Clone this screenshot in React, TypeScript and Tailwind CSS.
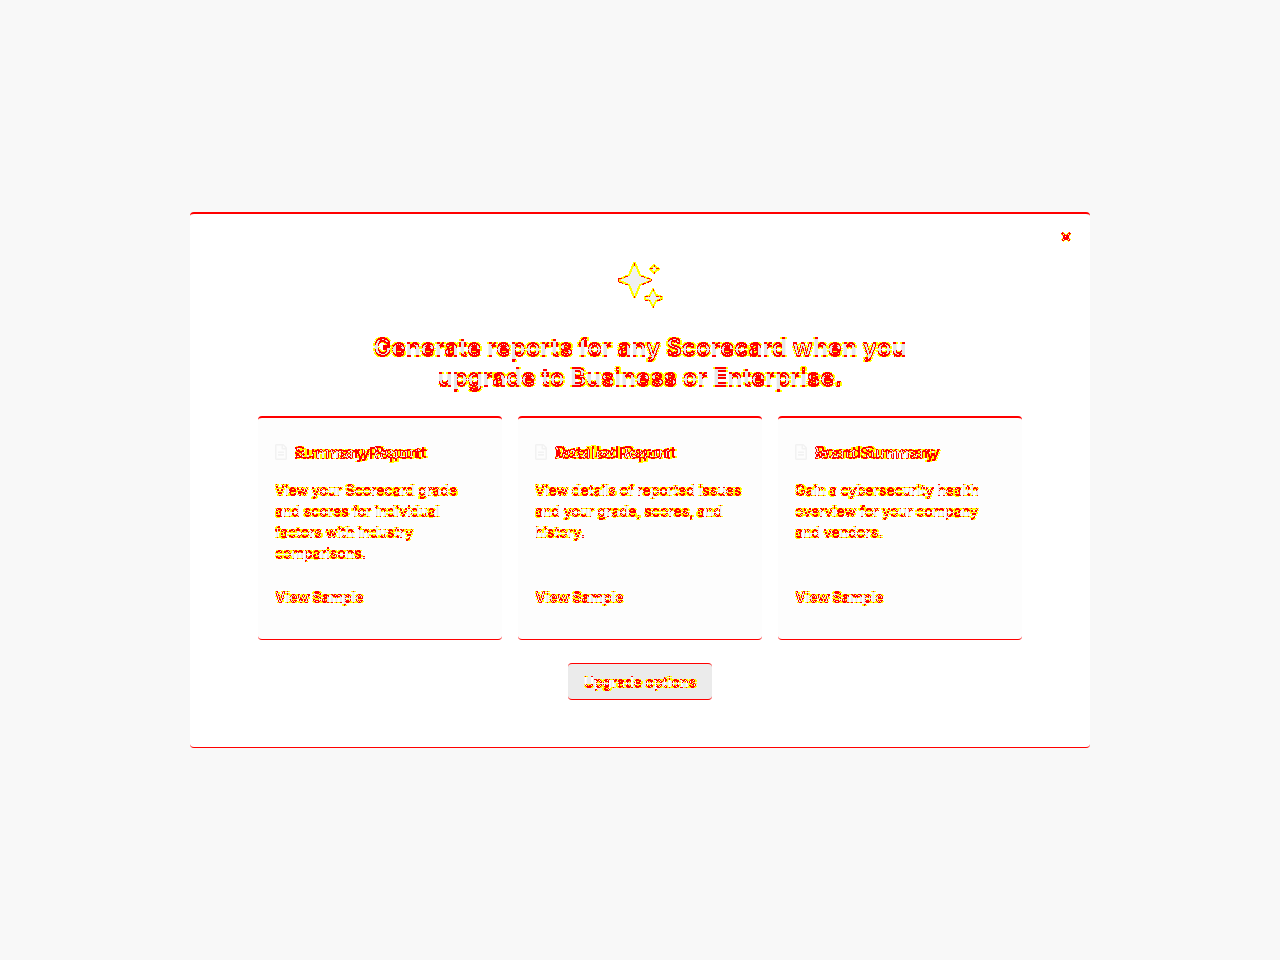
import { FaRegFileAlt } from "react-icons/fa";

const reports = [
  {
    title: "Summary Report",
    text: "View your Scorecard grade and scores for individual factors with industry comparisons.",
  },
  {
    title: "Detailed Report",
    text: "View details of reported issues and your grade, scores, and history.",
  },
  {
    title: "Board Summary",
    text: "Gain a cybersecurity health overview for your company and vendors.",
  },
];

// Paints a pale fill, red where a shifted copy differs and yellow along its curved edges.
function ShiftFilter({ id, dx, dy, fill }: { id: string; dx: number; dy: number; fill: string }) {
  return (
    <filter id={id} x="0" y="-0.1" width="1.02" height="1.2" colorInterpolationFilters="sRGB">
      <feOffset in="SourceAlpha" dx={dx} dy={dy} result="moved" />
      <feComposite in="SourceAlpha" in2="moved" operator="arithmetic" k1="0" k2="1" k3="-1" k4="0" result="d1" />
      <feComposite in="moved" in2="SourceAlpha" operator="arithmetic" k1="0" k2="1" k3="-1" k4="0" result="d2" />
      <feMerge result="diff">
        <feMergeNode in="d1" />
        <feMergeNode in="d2" />
      </feMerge>
      <feComponentTransfer in="diff" result="mask">
        <feFuncA type="discrete" tableValues="0 1 1 1 1 1 1 1 1 1 1 1" />
      </feComponentTransfer>
      <feMerge result="union">
        <feMergeNode in="SourceAlpha" />
        <feMergeNode in="moved" />
      </feMerge>
      <feComponentTransfer in="union" result="soft">
        <feFuncA type="discrete" tableValues="0 1 1 1 1 1 1 0 0 0" />
      </feComponentTransfer>
      <feComposite in="mask" in2="soft" operator="in" result="edge" />
      <feMorphology in="edge" operator="dilate" radius="1 0" result="wide" />
      <feComposite in="wide" in2="union" operator="out" result="outside" />
      <feComponentTransfer in="outside" result="halo">
        <feFuncA type="discrete" tableValues="0 0 0 1 1" />
      </feComponentTransfer>
      <feFlood floodColor="#ff0000" />
      <feComposite in2="mask" operator="in" result="red" />
      <feFlood floodColor="#ffff00" result="paint" />
      <feComposite in="paint" in2="edge" operator="in" result="yellow" />
      <feComposite in="paint" in2="halo" operator="in" result="glow" />
      <feFlood floodColor={fill} />
      <feComposite in2="SourceAlpha" operator="in" result="base" />
      <feMerge>
        <feMergeNode in="glow" />
        <feMergeNode in="base" />
        <feMergeNode in="red" />
        <feMergeNode in="yellow" />
      </feMerge>
    </filter>
  );
}

function Sparkles() {
  const big = "M34 13L35 13L40 25L50 29L51 30L50 31L40 35L35 47L34 47L29 35L20 31L19 30L20 29L29 25Z";
  const mid = "M53 39L56 45L62 47L62 49L56 51L53 57L50 51L45 49L45 47L50 45Z";
  const small = "M54 15L56 17L59 19L56 21L54 23L52 21L50 19L52 17Z";
  return (
    <svg width="80" height="70" viewBox="0 0 80 70" shapeRendering="crispEdges" aria-hidden="true">
      <g fill="#f0f0f0" stroke="#ffff00" strokeWidth="2">
        <path d={big} />
        <path d={mid} />
        <path d={small} />
      </g>
      <g fill="none" stroke="#ff0000" strokeWidth="1">
        <path d="M28 26L19 29M19 32L28 35M41 26L50 29M51 31L41 35" strokeDasharray="4 2" />
        <path d="M18.500 28V32M51.500 29V31M34.500 13V16M34.500 46V48" />
        <path d="M45 47L50 46M45 50L50 51M56 46L62 47M57 51L62 49" strokeDasharray="3 1" />
        <path d="M53 39V41M53 56V58" />
        <path d="M50 18.500H53M56 18.500H59M54.500 15V17M54.500 22V24" />
      </g>
    </svg>
  );
}

export default function App() {
  return (
    <main className="flex min-h-screen items-center justify-center bg-[#f8f8f8] font-['Inter',sans-serif] text-sm text-[#ededed]">
      <svg className="absolute h-0 w-0" aria-hidden="true">
        <defs>
          <ShiftFilter id="shift-large" dx={0} dy={2} fill="#e8e8e8" />
          <ShiftFilter id="shift-text" dx={0} dy={1} fill="#ededed" />
          <ShiftFilter id="shift-light" dx={0} dy={1} fill="#ffffff" />
          <ShiftFilter id="shift-title" dx={-5} dy={1} fill="#ededed" />
        </defs>
      </svg>
      <section
        role="dialog"
        aria-labelledby="dialog-title"
        className="relative flex w-full max-w-[900px] flex-col items-center rounded-sm border-t-2 border-b border-t-[#ff0000] border-b-[#ff0000] bg-white px-[68px] pt-9 pb-[47px]"
      >
        <button aria-label="Close" className="absolute top-[17px] right-[18px] flex">
          <svg width="12" height="12" viewBox="0 0 12 12" shapeRendering="crispEdges">
            <path d="M2 2L10 10M10 2L2 10" stroke="#ffff00" strokeWidth="4" />
            <path d="M2 2L10 10M10 2L2 10" stroke="#ff0000" strokeWidth="2" />
            <path d="M3 4H9V9H3Z" fill="#ff0000" />
            <path d="M3 3h1v1H3zM8 3h1v1H8zM5 5h1v1H5zM3 8h1v1H3zM8 8h1v1H8z" fill="#ffffff" />
          </svg>
        </button>
        <Sparkles />
        <h1
          id="dialog-title"
          className="mt-3 max-w-[560px] text-center text-2xl leading-[30px] font-bold [filter:url(#shift-large)]"
        >
          Generate reports for any Scorecard when you upgrade to Business or Enterprise.
        </h1>
        <div className="mt-6 grid w-full grid-cols-3 gap-4">
          {reports.map((report) => (
            <article
              key={report.title}
              className="flex h-56 flex-col items-start rounded-sm border-t-2 border-b border-t-[#ff0000] border-b-[#ff0000] bg-[#fdfdfd] px-[17px] pt-6 pb-8"
            >
              <div className="flex items-center gap-2">
                <FaRegFileAlt className="h-4 w-3 text-[#f2f2f2]" />
                <h2 className="text-base leading-5 font-bold [filter:url(#shift-title)]">{report.title}</h2>
              </div>
              <p className="mt-[17px] leading-[21px] font-medium [filter:url(#shift-text)]">{report.text}</p>
              <a href="#sample" className="mt-auto leading-5 font-bold [filter:url(#shift-text)]">
                View Sample
              </a>
            </article>
          ))}
        </div>
        <button className="mt-[23px] h-[37px] rounded-sm border-y border-[#ff0000] bg-[#ebebeb] px-4 font-semibold text-white">
          <span className="block [filter:url(#shift-light)]">Upgrade options</span>
        </button>
      </section>
    </main>
  );
}
